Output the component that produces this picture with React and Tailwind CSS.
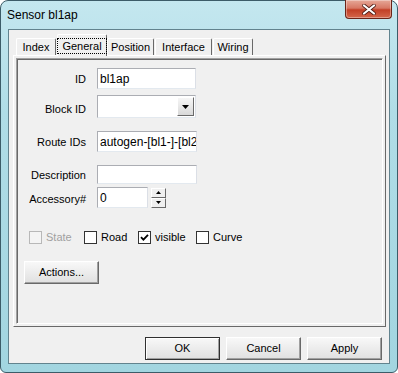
const font = { fontFamily: '"Liberation Sans", Arial, sans-serif' }

const Tab = ({ label, w, ml = '', selected }) => {
  if (selected) {
    return (
      <div
        className={`${ml} ${w} h-[22px] relative z-10 -mb-px flex items-start justify-center pt-[3px] bg-[#f0f0f0] border-l border-t border-white border-r border-r-[#696969] rounded-t-[2px]`}
      >
        <span className="border border-dotted border-black px-[4px] leading-[14px]">{label}</span>
      </div>
    )
  }
  return (
    <div
      className={`${ml} ${w} h-[17px] flex items-center justify-center bg-[#f0f0f0] border-l border-t border-white border-r border-r-[#696969] rounded-t-[2px] leading-none`}
    >
      {label}
    </div>
  )
}

const TextBox = ({ w = 'w-[99px]', h = 'h-[21px]', value = '' }) => (
  <div
    className={`${w} ${h} bg-white border border-[#abadb3] border-r-[#dbdfe6] border-b-[#e3e9ef] flex items-center pl-[2px] overflow-hidden whitespace-nowrap text-[12px]`}
  >
    {value}
  </div>
)

const Row = ({ label, mt, children, labelPad = '' }) => (
  <div className={`flex items-center ${mt}`}>
    <div className={`w-[69px] text-right ${labelPad}`}>{label}</div>
    <div className="ml-[11px] flex items-center">{children}</div>
  </div>
)

const Check = ({ label, checked, disabled, w }) => (
  <div className={`flex items-center ${w}`}>
    <div
      className={`w-[13px] h-[13px] border ${disabled ? 'border-[#b8b8b8] bg-[#f4f4f4]' : 'border-[#333] bg-white'} flex items-center justify-center`}
    >
      {checked && (
        <svg width="9" height="9" viewBox="0 0 9 9">
          <path d="M1 4.2 L3.4 6.6 L8 1.8" stroke="#000" strokeWidth="1.8" fill="none" />
        </svg>
      )}
    </div>
    <span className={`ml-[4px] ${disabled ? 'text-[#a0a0a0]' : 'text-black'}`}>{label}</span>
  </div>
)

const Btn = ({ label, w = 'w-[75px]', def }) => (
  <div
    className={`${w} h-[23px] flex items-center justify-center bg-[linear-gradient(180deg,#f8f8f8_0%,#ececec_50%,#e0e0e0_100%)] ${
      def
        ? 'border border-[#303030] shadow-[inset_1px_1px_0_#fff,inset_-1px_-1px_0_#a0a0a0]'
        : 'border border-white border-r-[#696969] border-b-[#696969] shadow-[inset_-1px_-1px_0_#a0a0a0]'
    }`}
  >
    {label}
  </div>
)

const SpinBtn = ({ up }) => (
  <div className="w-[15px] h-[10px] flex items-center justify-center bg-[#f0f0f0] border border-white border-r-[#696969] border-b-[#696969]">
    <svg width="5" height="3" viewBox="0 0 5 3">
      <path d={up ? 'M0 3 L2.5 0 L5 3 Z' : 'M0 0 L2.5 3 L5 0 Z'} fill="#000" />
    </svg>
  </div>
)

export default function App() {
  return (
    <div className="w-[398px] h-[373px] overflow-hidden" style={font}>
      <div className="w-[398px] h-[373px] flex flex-col border border-[#3c5c68] rounded-t-[8px] rounded-b-[6px] bg-[linear-gradient(180deg,#c4e7ef_0%,#b0dde7_30%,#a2d5e0_100%)] text-[11px] text-black">
        {/* Title bar */}
        <div className="h-[28px] flex items-start justify-between">
          <div className="pl-[6px] pt-[7px] text-[12px] leading-[14px]">Sensor bl1ap</div>
          <div className="-mt-px mr-[5px] w-[47px] h-[19px] rounded-b-[4px] border border-[#6b2418] border-t-0 bg-[linear-gradient(180deg,#e6a898_0%,#d77864_45%,#c23f26_55%,#d4674b_100%)] shadow-[inset_0_0_0_1px_rgba(255,255,255,0.35)] flex items-center justify-center">
            <svg width="14" height="11" viewBox="0 0 14 11">
              <path d="M2 1.5 L12 9.5 M12 1.5 L2 9.5" stroke="#4a1a12" strokeWidth="3.6" strokeLinecap="round" />
              <path d="M2 1.5 L12 9.5 M12 1.5 L2 9.5" stroke="#fff" strokeWidth="2.2" strokeLinecap="round" />
            </svg>
          </div>
        </div>

        {/* Client area */}
        <div className="flex-1 mx-[7px] mb-[8px] border border-[#62838e] bg-[#f0f0f0] flex flex-col">
          {/* Tab strip */}
          <div className="h-[25px] flex items-end pl-[7px]">
            <Tab label="Index" w="w-[40px]" />
            <Tab label="General" w="w-[50px]" ml="ml-[1px]" selected />
            <Tab label="Position" w="w-[47px]" />
            <Tab label="Interface" w="w-[57px]" ml="ml-[1px]" />
            <Tab label="Wiring" w="w-[40px]" ml="ml-[1px]" />
          </div>

          {/* Tab page */}
          <div className="ml-[4px] mr-[3px] h-[272px] border-l border-t border-white border-r border-b border-r-[#696969] border-b-[#696969] p-[2px]">
            <div className="h-full border border-[#a0a0a0] border-r-white border-b-white shadow-[inset_1px_1px_0_#696969] flex flex-col">
              <Row label="ID" mt="mt-[9px]" labelPad="pt-[2px]">
                <TextBox value="bl1ap" />
              </Row>
              <Row label="Block ID" mt="mt-[6px]" labelPad="pt-[5px]">
                <div className="w-[99px] h-[23px] bg-white border border-[#abadb3] border-r-[#dbdfe6] border-b-[#e3e9ef] flex items-center justify-end pr-[1px]">
                  <div className="w-[17px] h-[19px] flex items-center justify-center bg-[linear-gradient(180deg,#f6f6f6_0%,#e8e8e8_50%,#d8d8d8_100%)] border border-white border-r-[#696969] border-b-[#696969]">
                    <svg width="7" height="4" viewBox="0 0 7 4">
                      <path d="M0 0 L7 0 L3.5 4 Z" fill="#000" />
                    </svg>
                  </div>
                </div>
              </Row>
              <Row label="Route IDs" mt="mt-[13px]" labelPad="pt-[1px]">
                <TextBox w="w-[100px]" value="autogen-[bl1-]-[bl2-]" />
              </Row>
              <Row label="Description" mt="mt-[13px]" labelPad="pt-[1px]">
                <TextBox w="w-[100px]" h="h-[19px]" />
              </Row>
              <Row label="Accessory#" mt="mt-[3px]" labelPad="pt-[3px]">
                <TextBox w="w-[51px]" value="0" />
                <div className="ml-[3px] flex flex-col">
                  <SpinBtn up />
                  <SpinBtn />
                </div>
              </Row>

              {/* Checkboxes */}
              <div className="mt-[21px] pl-[12px] flex items-center">
                <Check label="State" disabled w="w-[55px]" />
                <Check label="Road" w="w-[54px]" />
                <Check label="visible" checked w="w-[58px]" />
                <Check label="Curve" />
              </div>

              <div className="mt-[15px] pl-[7px]">
                <Btn label="Actions..." w="w-[75px]" />
              </div>
            </div>
          </div>

          {/* Dialog buttons */}
          <div className="mt-[10px] flex justify-end gap-[6px] pr-[7px]">
            <Btn label="OK" def />
            <Btn label="Cancel" />
            <Btn label="Apply" />
          </div>
        </div>
      </div>
    </div>
  )
}
